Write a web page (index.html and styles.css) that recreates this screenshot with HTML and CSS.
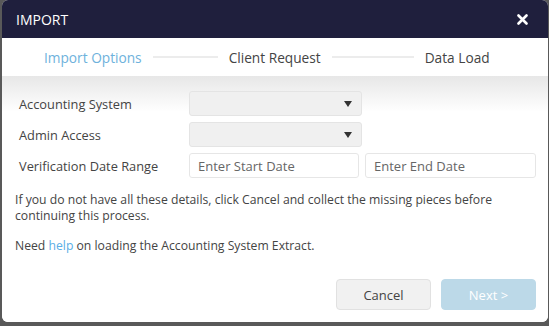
FILE: index.html
```html
<!DOCTYPE html>
<html lang="en">
<head>
    <title>Import</title>
    <link rel="stylesheet" href="styles.css">
</head>
<body>
    <div class="dialog">
        <div class="header">
            <span class="title">IMPORT</span>
            <svg class="close" width="11" height="11" viewBox="0 0 11 11">
                <path d="M1.5 1.5 L9.5 9.5 M9.5 1.5 L1.5 9.5" stroke="#fff" stroke-width="2.6" stroke-linecap="round"/>
            </svg>
        </div>

        <div class="steps">
            <span class="step active">Import Options</span>
            <span class="line first"></span>
            <span class="step">Client Request</span>
            <span class="line second"></span>
            <span class="step">Data Load</span>
        </div>

        <div class="content">
            <div class="form">
                <label>Accounting System</label>
                <div class="select"><span class="caret"></span></div>

                <label>Admin Access</label>
                <div class="select"><span class="caret"></span></div>

                <label>Verification Date Range</label>
                <div class="dates">
                    <input type="text" placeholder="Enter Start Date">
                    <input type="text" placeholder="Enter End Date">
                </div>
            </div>

            <p class="note">If you do not have all these details, click Cancel and collect the missing pieces before continuing this process.</p>
            <p class="note">Need <a href="#">help</a> on loading the Accounting System Extract.</p>

            <div class="buttons">
                <button class="cancel">Cancel</button>
                <button class="next">Next &gt;</button>
            </div>
        </div>
    </div>
</body>
</html>
```

FILE: styles.css
```css
* {
    margin: 0;
    padding: 0;
    box-sizing: border-box;
    font-family: 'Open Sans', sans-serif;
}

body {
    background: #595959;
    height: 326px;
    overflow: hidden;
}

.dialog {
    margin-left: 2px;
    width: 546px;
    height: 322px;
    background: white;
    border-radius: 6px;
    overflow: hidden;
}

.header {
    height: 38px;
    background: #1f1f3d;
    display: flex;
    align-items: center;
    justify-content: space-between;
    padding: 0 20px 0 14px;
}

.title {
    color: white;
    font-size: 14px;
}

.steps {
    height: 38px;
    display: flex;
    align-items: center;
    padding-left: 42px;
    font-size: 13.7px;
    color: #444;
}

.step.active {
    color: #6eb2dc;
}

.line {
    height: 2px;
    background: #ececec;
    margin: 0 11px;
}

.line.first {
    width: 65px;
}

.line.second {
    width: 82px;
}

.content {
    background: linear-gradient(to bottom, #e7e7e7, #fff 36px);
    padding: 15px 12px 0 17px;
    height: 246px;
}

.form {
    display: grid;
    grid-template-columns: 170px 1fr;
    row-gap: 6px;
    align-items: center;
    font-size: 12.8px;
    color: #444;
}

.select {
    width: 173px;
    height: 25px;
    background: #f0f0f0;
    border: 1px solid #e4e4e4;
    border-radius: 3px;
    display: flex;
    align-items: center;
    justify-content: flex-end;
    padding-right: 9px;
}

.caret {
    width: 0;
    height: 0;
    border-left: 4px solid transparent;
    border-right: 4px solid transparent;
    border-top: 6px solid #333;
}

.dates {
    display: flex;
    gap: 6px;
}

.dates input {
    width: 170px;
    height: 25px;
    border: 1px solid #e6e6e6;
    border-radius: 3px;
    padding: 0 8px;
    font-size: 13px;
    color: #444;
    background: white;
}

.dates input + input {
    width: 171px;
}

.dates input::placeholder {
    color: #666;
}

.note {
    font-size: 12.2px;
    color: #444;
    line-height: 16px;
    margin-left: -4px;
    margin-top: 14px;
}

.note + .note {
    margin-top: 14px;
}

.note a {
    color: #5aaee6;
    text-decoration: none;
}

.buttons {
    display: flex;
    justify-content: flex-end;
    gap: 10px;
    margin-top: 25px;
}

.buttons button {
    width: 95px;
    height: 31px;
    border-radius: 4px;
    font-size: 13px;
}

.cancel {
    background: #f1f1f1;
    border: 1px solid #e1e1e1;
    color: #444;
}

.next {
    background: #bcd9e8;
    border: 1px solid #bcd9e8;
    color: white;
}
```
